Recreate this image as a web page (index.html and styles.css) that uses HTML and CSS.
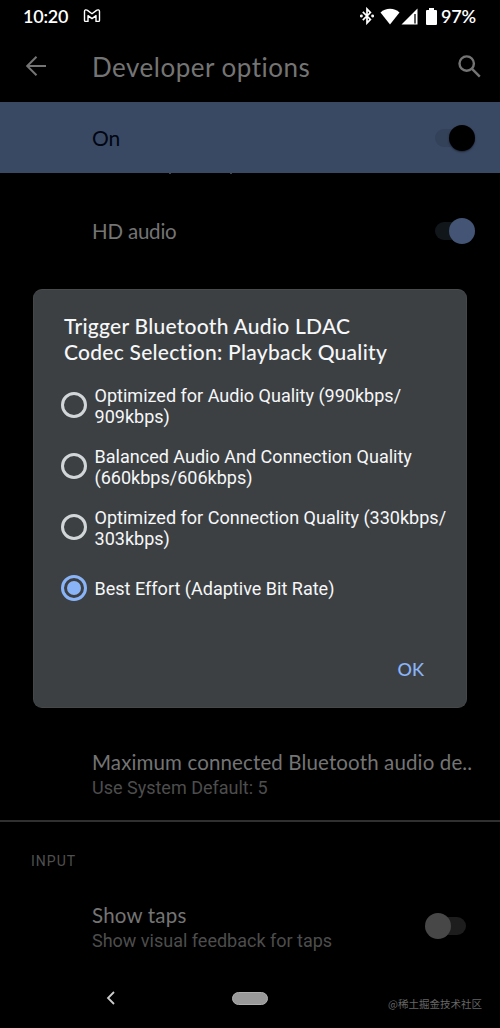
FILE: index.html
```html
<!DOCTYPE html>
<html lang="en">
<head>
<meta charset="utf-8">
<title>Developer options</title>
<link rel="stylesheet" href="styles.css">
</head>
<body>
<main class="phone">
  <header class="status">
    <span class="clock">10:20</span>
    <svg class="gmail" width="18" height="14" viewBox="0 0 18 14" fill="none" stroke="#fff" stroke-width="1.4" stroke-linejoin="round"><path d="M1.500 2.500V11.500q0 .9.900.9h2.600V6.600L9 9.600l4-3v5.800h2.600q.9 0 .9-.9V2.500C16.500.8 14.800.4 13.500 1.400L9 4.800 4.500 1.400C3.200.4 1.500.8 1.500 2.500Z"/></svg>
    <div class="indicators">
      <svg class="bt" width="14" height="18" viewBox="0 0 14 18" fill="none" stroke="#fff" stroke-width="1.700"><path d="M2.800 4.800l7.600 7.600L7 16V2l3.400 3.600-7.600 7.600"/><circle cx="1.400" cy="9" r=".6" fill="#fff"/><circle cx="12.600" cy="9" r=".6" fill="#fff"/></svg>
      <svg class="wifi" width="20" height="17" viewBox="0 0 20 17" fill="#fff"><path d="M.5 4.500Q4.500.8 10 .8t9.500 3.700L10 16.500Z"/></svg>
      <svg class="cell" width="17" height="17" viewBox="0 0 17 17"><path d="M.5 16.500L16.500.5v16Z" fill="#fff"/><path d="M14 6v9.500" stroke="#000" stroke-width="1.300"/></svg>
      <svg class="battery" width="11" height="17" viewBox="0 0 11 17" fill="#fff"><path d="M3 0h5v2h2q1 0 1 1v13q0 1-1 1H1q-1 0-1-1V3q0-1 1-1h2Z"/></svg>
      <span class="percent">97%</span>
    </div>
  </header>
  <div class="appbar">
    <svg width="22" height="22" viewBox="0 0 22 22" fill="none" stroke="#747474" stroke-width="2"><path d="M21 11H2.500M11.500 1.700L2.200 11l9.300 9.300"/></svg>
    <h1 class="title">Developer options</h1>
    <svg width="23" height="23" viewBox="0 0 23 23" fill="none" stroke="#747474" stroke-width="2.400"><circle cx="8.700" cy="8.600" r="7.200"/><path d="M13.800 13.700l8 8"/></svg>
  </div>
  <section class="master">
    <span class="master-label">On</span>
    <span class="switch master-switch"><i class="knob"></i></span>
  </section>
  <div class="clipped"><i></i><i></i></div>
  <section class="row hd">
    <span class="name hd-name">HD audio</span>
    <span class="switch on"><i class="knob"></i></span>
  </section>
  <section class="setting max">
    <span class="name max-name">Maximum connected Bluetooth audio de..</span>
    <span class="summary max-sum">Use System Default: 5</span>
  </section>
  <h2 class="group">INPUT</h2>
  <section class="row taps">
    <div class="setting">
      <span class="name taps-name">Show taps</span>
      <span class="summary taps-sum">Show visual feedback for taps</span>
    </div>
    <span class="switch off"><i class="knob"></i></span>
  </section>
  <nav class="nav">
    <svg class="back" width="10" height="14" viewBox="0 0 10 14" fill="none" stroke="#ccc" stroke-width="1.800"><path d="M8 1L2 7l6 6"/></svg>
    <span class="home"></span>
    <span class="credit">@稀土掘金技术社区</span>
  </nav>
  <div class="dialog" role="dialog">
    <h2 class="dialog-title">Trigger Bluetooth Audio LDAC<br>Codec Selection: Playback Quality</h2>
    <div class="option"><i class="radio"></i><span class="label">Optimized for Audio Quality (990kbps/<br>909kbps)</span></div>
    <div class="option"><i class="radio"></i><span class="label">Balanced Audio And Connection Quality<br>(660kbps/606kbps)</span></div>
    <div class="option"><i class="radio"></i><span class="label">Optimized for Connection Quality (330kbps/<br>303kbps)</span></div>
    <div class="option"><i class="radio checked"></i><span class="label">Best Effort (Adaptive Bit Rate)</span></div>
    <div class="actions"><span class="ok">OK</span></div>
  </div>
</main>
</body>
</html>
```
FILE: styles.css
```css
* { box-sizing: border-box; }
body { margin: 0; background: #000; }
.phone {
  position: relative;
  display: flex;
  flex-direction: column;
  width: 500px;
  height: 1028px;
  overflow: hidden;
  background: #000;
  color: #747474;
  font-family: Lato, sans-serif;
  font-variant-ligatures: none;
  white-space: nowrap;
}
.phone > * { flex-shrink: 0; }
h1, h2 { margin: 0; font-weight: 400; }
svg { display: block; flex: none; }
.status { display: flex; align-items: center; height: 32px; padding: 0 23px 0 23px; color: #fff; }
.clock, .percent { font-size: 18px; font-weight: 600; line-height: 32px; letter-spacing: -.2px; }
.clock { width: 60px; }
.gmail { margin-top: -1px; }
.indicators { display: flex; align-items: center; margin-left: auto; }
.wifi { margin-left: 6px; }
.cell { margin-left: 1px; }
.battery { margin-left: 8px; }
.percent { margin-left: 4px; width: 36px; }
.appbar { display: flex; align-items: center; height: 70px; padding: 0 19px 2px 25px; }
.title { flex: 1; margin-left: 45px; padding-top: 2px; font-size: 26px; line-height: 34px; letter-spacing: .5px; }
.master { display: flex; align-items: center; justify-content: space-between; height: 71px; padding: 0 25px 0 92px; background: #3a4963; color: #000612; }
.master-label { font-size: 21px; }
.switch { display: flex; align-items: center; width: 40px; height: 18px; border-radius: 9px; background: #11161b; }
.knob { width: 26px; height: 26px; flex: none; border-radius: 50%; background: #435474; margin-left: 14px; }
.master-switch { background: #334159; }
.master-switch .knob { background: #000; box-shadow: 0 1px 2px #1c2536; }
.off { margin-top: -4px; background: #1d1d1d; }
.off .knob { margin-left: -1px; background: #474747; }
.clipped { display: flex; gap: 59px; height: 2px; padding-left: 169px; }
.clipped i { width: 2px; height: 1px; background: #444; }
.row { display: flex; align-items: center; justify-content: space-between; padding: 0 25px 0 92px; }
.hd { height: 111px; }
.name { font-size: 20.500px; line-height: 26px; letter-spacing: .13px; }
.hd-name { letter-spacing: -.2px; }
.taps-name { letter-spacing: .2px; }
.summary { font-family: Roboto, sans-serif; font-size: 18px; line-height: 26px; color: #4d4d4d; }
.setting { display: flex; flex-direction: column; }
.max { margin-top: 444px; height: 92px; padding: 19px 0 0 92px; border-bottom: 2px solid #303030; }
.group { height: 78px; padding-left: 31px; font-family: Roboto, sans-serif; font-size: 14px; line-height: 78px; letter-spacing: 1px; color: #505050; }
.taps { height: 56px; padding-right: 34px; }
.nav { display: flex; align-items: center; height: 72px; padding: 12px 18px 0 106px; }
.back { margin-top: -1px; }
.home { width: 36px; height: 13px; margin-left: 116px; border-radius: 7px; background: #999; border: 1px solid #b0b0b0; }
.credit { margin-left: auto; margin-top: 11px; font-family: "Noto Sans CJK SC", sans-serif; font-size: 10.500px; color: #666; }
.dialog {
  position: absolute;
  left: 33px;
  top: 289px;
  width: 434px;
  height: 419px;
  padding: 23px 19px 0 27px;
  border-radius: 9px;
  background: #3d4043;
  border: 1px solid #454849;
  border-top-color: #484b4c;
  color: #f5f7f8;
}
.dialog-title { padding-left: 3px; font-size: 21px; line-height: 26px; font-weight: 500; letter-spacing: .26px; }
.option { display: flex; align-items: center; height: 61px; }
.dialog-title + .option { margin-top: 9px; }
.radio { display: flex; align-items: center; justify-content: center; width: 26px; height: 26px; flex: none; border: 3px solid #d3d6d9; border-radius: 50%; }
.radio.checked { border-color: #8ab4f8; }
.checked::after { content: ""; width: 14px; height: 14px; border-radius: 50%; background: #8ab4f8; }
.label { margin-left: 7.500px; padding-top: 2px; font: 18.050px/21px Roboto, sans-serif; }
.actions { display: flex; justify-content: flex-end; padding: 39px 23px 0 0; }
.ok { font-size: 18px; line-height: 24px; font-weight: 500; color: #8ab4f8; }
```
